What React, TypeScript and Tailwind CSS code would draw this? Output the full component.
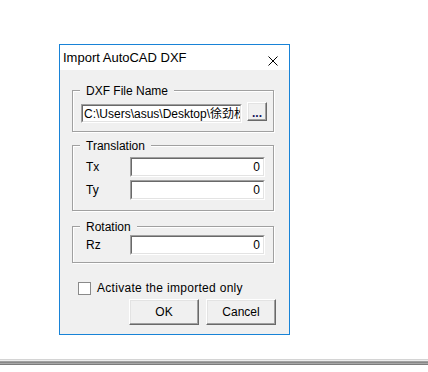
import type { ReactNode } from "react"

const etched = "relative border border-[#a0a0a0] shadow-[inset_1px_1px_0_#fff,1px_1px_0_#fff]"

function Group({ title, className, children }: { title: string; className?: string; children: ReactNode }) {
  return (
    <div className={`${etched} ml-[12px] w-[202px] ${className ?? ""}`}>
      <span className="absolute -top-[7px] left-[7px] bg-[#f0f0f0] px-[6px] text-[12px] leading-[14px] text-black">
        {title}
      </span>
      {children}
    </div>
  )
}

function Sunken({ className, children }: { className?: string; children: ReactNode }) {
  return (
    <div className={`border border-t-[#a0a0a0] border-l-[#a0a0a0] border-r-white border-b-white ${className ?? ""}`}>
      <div className="flex h-full items-center overflow-hidden whitespace-nowrap border border-t-[#696969] border-l-[#696969] border-r-[#e3e3e3] border-b-[#e3e3e3] bg-white text-[12px] leading-[14px] text-black">
        {children}
      </div>
    </div>
  )
}

function Button({ children, className }: { children: ReactNode; className?: string }) {
  return (
    <div
      className={`flex items-center justify-center border border-t-white border-l-white border-r-[#696969] border-b-[#696969] bg-[#f0f0f0] text-[12px] leading-[14px] text-black shadow-[inset_-1px_-1px_0_#a0a0a0,inset_1px_1px_0_#e3e3e3] ${className ?? ""}`}
    >
      {children}
    </div>
  )
}

function NumberRow({ label }: { label: string }) {
  return (
    <div className="flex items-center pl-[13px]">
      <span className="w-[44px] text-[12px] leading-[14px] text-black">{label}</span>
      <Sunken className="h-[20px] w-[135px]">
        <span className="ml-auto pr-[3px]">0</span>
      </Sunken>
    </div>
  )
}

export default function App() {
  return (
    <div className="h-[372px] w-[428px] overflow-hidden bg-white pt-[44px] font-['Liberation_Sans','Noto_Sans_CJK_SC',sans-serif]">
      {/* dialog window */}
      <div className="ml-[59px] w-[231px] border border-[#1883d7]">
        <div className="flex h-[25px] items-start justify-between bg-white pl-[3px] pr-[11px]">
          <span className="mt-[5px] text-[13px] leading-[16px] text-black">Import AutoCAD DXF</span>
          <svg className="mt-[11px]" width="10" height="10" viewBox="0 0 10 10">
            <path d="M0.5 0.5 L9.5 9.5 M9.5 0.5 L0.5 9.5" stroke="#000" strokeWidth="1" fill="none" />
          </svg>
        </div>

        <div className="bg-[#f0f0f0] pt-[20px] pb-[9px]">
          <Group title="DXF File Name" className="pt-[11px] pb-[8px] pl-[8px] pr-[6px]">
            <div className="flex items-start gap-[5px]">
              <Sunken className="mt-[2px] h-[19px] w-[161px]">
                <span className="pl-[1px]">{"C:\\Users\\asus\\Desktop\\徐劲松"}</span>
              </Sunken>
              <Button className="h-[19px] w-[20px]">
                <span className="mt-[2px] font-bold text-[#14145a]">...</span>
              </Button>
            </div>
          </Group>

          <Group title="Translation" className="mt-[13px] flex flex-col gap-[3px] pt-[11px] pb-[10px]">
            <NumberRow label="Tx" />
            <NumberRow label="Ty" />
          </Group>

          <Group title="Rotation" className="mt-[15px] pt-[8px] pb-[7px]">
            <NumberRow label="Rz" />
          </Group>

          <div className="mt-[19px] flex items-center pl-[18px]">
            <div className="h-[13px] w-[13px] border border-[#8a8a8a] bg-white" />
            <span className="ml-[6px] text-[12px] leading-[13px] tracking-[0.3px] text-black">
              Activate the imported only
            </span>
          </div>

          <div className="mt-[4px] flex justify-end gap-[7px] pr-[13px]">
            <Button className="h-[26px] w-[70px]">OK</Button>
            <Button className="h-[26px] w-[70px]">Cancel</Button>
          </div>
        </div>
      </div>

      {/* bottom edge of the host window */}
      <div className="mt-[24px] flex flex-col">
        <div className="h-px bg-[#d4d4d4]" />
        <div className="h-px bg-[#ececec]" />
        <div className="h-px bg-[#a0a0a0]" />
        <div className="h-px bg-[#888888]" />
        <div className="h-px bg-[#a8a8a8]" />
        <div className="h-px bg-[#7c7c7c]" />
      </div>
    </div>
  )
}
